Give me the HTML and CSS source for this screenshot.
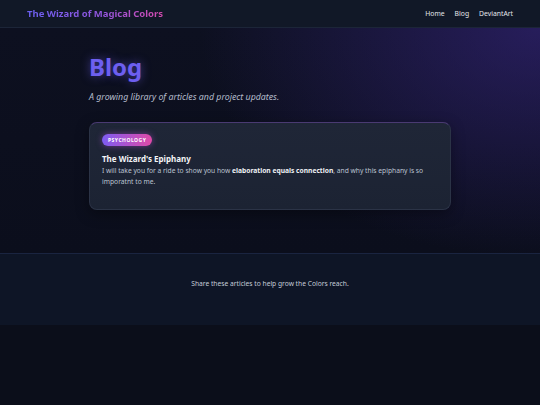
FILE: index.html
```html
<!DOCTYPE html>
<html lang="en">
<head>
<meta charset="utf-8">
<title>Blog</title>
<link rel="stylesheet" href="styles.css">
</head>
<body>
<header class="site-header">
  <a class="brand" href="#">The Wizard of Magical Colors</a>
  <nav class="nav">
    <a href="#">Home</a>
    <a href="#">Blog</a>
    <a href="#">DeviantArt</a>
  </nav>
</header>
<main class="main">
  <div class="container">
    <h1 class="title">Blog</h1>
    <p class="subtitle">A growing library of articles and project updates.</p>
    <article class="card">
      <span class="badge">Psychology</span>
      <h2 class="card-title">The Wizard's Epiphany</h2>
      <p class="card-text">I will take you for a ride to show you how <strong>elaboration equals connection</strong>, and why this epiphany is so imporatnt to me.</p>
    </article>
  </div>
</main>
<footer class="footer">
  <p>Share these articles to help grow the Colors reach.</p>
</footer>
</body>
</html>
```
FILE: styles.css
```css
* { box-sizing: border-box; }
html, body { margin: 0; padding: 0; }
body {
  font-family: "Noto Sans", "Open Sans", sans-serif;
  background: #0b0e1a;
  color: #e5e7eb;
  min-height: 405px;
}
.site-header {
  height: 28px;
  display: flex;
  align-items: center;
  justify-content: space-between;
  padding: 0 27px;
  background: #111827;
  border-bottom: 1px solid #1c2538;
}
.brand {
  font-size: 9.5px;
  font-weight: 700;
  text-decoration: none;
  background: linear-gradient(90deg, #6a5ff0 0%, #9456e0 55%, #d44aae 100%);
  -webkit-background-clip: text;
  background-clip: text;
  color: transparent;
}
.nav { display: flex; gap: 10px; }
.nav a {
  color: #e5e7eb;
  font-size: 6.8px;
  text-decoration: none;
}
.main {
  background:
    radial-gradient(ellipse 340px 230px at 100% 0%, rgba(60, 40, 140, 0.55), rgba(60, 40, 140, 0) 100%),
    linear-gradient(180deg, #0d1020 0%, #0b0e1c 100%);
  padding: 22px 0 43px;
}
.container { width: 362px; margin: 0 auto; }
.title {
  margin: 0;
  font-size: 24px;
  line-height: 33px;
  font-weight: 700;
  color: #6d5ff0;
  text-shadow: 0 0 10px rgba(109, 95, 240, 0.55);
}
.subtitle {
  margin: 8px 0 0;
  font-size: 8.8px;
  line-height: 12px;
  font-style: italic;
  color: #b4bccb;
}
.card {
  margin-top: 19px;
  display: flex;
  flex-direction: column;
  align-items: flex-start;
  background: linear-gradient(180deg, #1f2637 0%, #1c2333 100%);
  border: 1px solid #2b3346;
  border-top-color: #4a3a72;
  border-radius: 8px;
  padding: 11px 12px 12px;
  box-shadow: 0 4px 14px rgba(0, 0, 0, 0.35);
}
.badge {
  display: block;
  font-size: 5px;
  font-weight: 700;
  letter-spacing: 0.5px;
  text-transform: uppercase;
  color: #fff;
  padding: 2px 6px;
  line-height: 8px;
  border-radius: 8px;
  background: linear-gradient(90deg, #7d5cf2, #e04aa8);
  box-shadow: 0 0 6px rgba(180, 80, 220, 0.5);
}
.card-title {
  margin: 7px 0 0;
  font-size: 8px;
  line-height: 12px;
  font-weight: 700;
  color: #f3f4f6;
}
.card-text {
  margin: 0 0 10px;
  font-size: 6.7px;
  line-height: 11px;
  color: #bcc3d1;
}
.card-text strong { color: #eef0f4; }
.footer {
  background: #0e1526;
  border-top: 1px solid #1a2440;
  height: 72px;
  display: flex;
  align-items: flex-start;
  justify-content: center;
  padding-top: 25px;
}
.footer p {
  margin: 0;
  font-size: 6.7px;
  line-height: 10px;
  color: #c4cbd8;
}
```
